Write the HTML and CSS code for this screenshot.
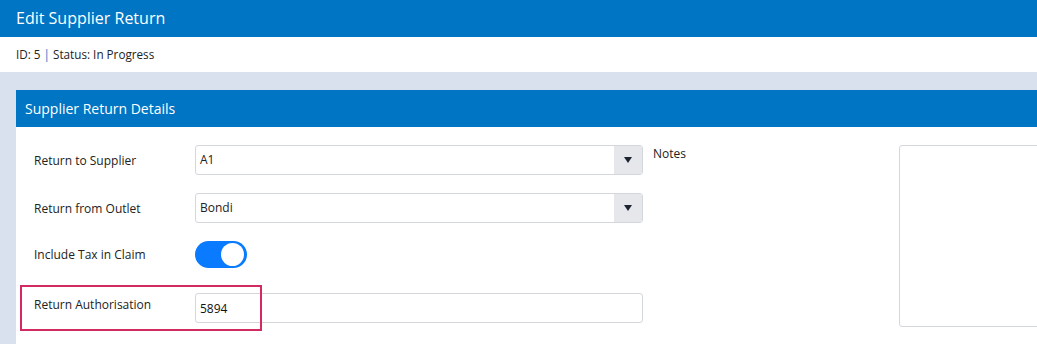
FILE: index.html
```html
<!DOCTYPE html>
<html>
<head>
    <title>Edit Supplier Return</title>
    <link rel="stylesheet" href="styles.css">
</head>
<body>
    <div class="page-title">Edit Supplier Return</div>
    <div class="page-status">ID: 5 <span class="sep">|</span> Status: In Progress</div>

    <div class="content">
        <div class="panel">
            <div class="panel-header">Supplier Return Details</div>
            <div class="panel-body">
                <div class="form-left">
                    <div class="form-row">
                        <label class="form-label">Return to Supplier</label>
                        <div class="select-box">
                            <span class="select-value">A1</span>
                            <span class="select-arrow"></span>
                        </div>
                    </div>
                    <div class="form-row">
                        <label class="form-label">Return from Outlet</label>
                        <div class="select-box">
                            <span class="select-value">Bondi</span>
                            <span class="select-arrow"></span>
                        </div>
                    </div>
                    <div class="form-row toggle-row">
                        <label class="form-label">Include Tax in Claim</label>
                        <div class="toggle on"><span class="knob"></span></div>
                    </div>
                    <div class="form-row auth-row">
                        <label class="form-label">Return Authorisation</label>
                        <input class="text-field" type="text" value="5894">
                        <div class="highlight"></div>
                    </div>
                </div>
                <div class="form-right">
                    <label class="notes-label">Notes</label>
                    <textarea class="notes-field"></textarea>
                </div>
            </div>
        </div>
    </div>
</body>
</html>
```

FILE: styles.css
```css
body {
    margin: 0;
    font-family: "Open Sans", "Noto Sans", sans-serif;
    background-color: #d9e1ef;
    color: #222;
    overflow: hidden;
}

.page-title {
    height: 37px;
    line-height: 36px;
    padding-left: 16px;
    background-color: #0075c4;
    color: #fff;
    font-size: 16px;
}

.page-status {
    height: 35px;
    line-height: 35px;
    padding-left: 16px;
    background-color: #fff;
    font-size: 11.7px;
}

.page-status .sep {
    color: #0075c4;
}

.content {
    padding: 18px 0 0 16px;
}

.panel {
    width: 1100px;
    background-color: #fff;
}

.panel-header {
    height: 37px;
    line-height: 37px;
    padding-left: 9px;
    background-color: #0075c4;
    color: #fff;
    font-size: 14px;
}

.panel-body {
    display: flex;
    padding: 18px 0 30px 18px;
}

.form-left {
    width: 609px;
}

.form-row {
    position: relative;
    display: flex;
    align-items: center;
    height: 30px;
    margin-bottom: 18px;
}

.toggle-row {
    height: 27px;
    margin-top: 2px;
    margin-bottom: 25px;
}

.form-label {
    width: 161px;
    flex-shrink: 0;
    font-size: 12px;
}

.auth-row .form-label {
    margin-top: -8px;
}

.select-box {
    display: flex;
    width: 446px;
    height: 28px;
    border: 1px solid #d3d6db;
    border-radius: 3px;
}

.select-value {
    flex: 1;
    line-height: 28px;
    padding-left: 4px;
    font-size: 12px;
}

.select-arrow {
    width: 28px;
    background-color: #e5e7eb;
    position: relative;
}

.select-arrow::after {
    content: "";
    position: absolute;
    left: 10px;
    top: 11px;
    border-left: 4px solid transparent;
    border-right: 4px solid transparent;
    border-top: 6px solid #1b2430;
}

.toggle {
    width: 52px;
    height: 27px;
    border-radius: 14px;
    background-color: #0a7bff;
    position: relative;
}

.toggle .knob {
    position: absolute;
    right: 3px;
    top: 2px;
    width: 23px;
    height: 23px;
    border-radius: 50%;
    background-color: #fff;
}

.text-field {
    height: 28px;
    margin: 0;
    padding: 0 4px;
    border: 1px solid #d3d6db;
    border-radius: 3px;
    box-sizing: content-box;
    width: 438px;
    font-family: inherit;
    font-size: 12px;
    color: #111;
    outline: none;
}

.highlight {
    position: absolute;
    left: -14px;
    top: -8px;
    width: 238px;
    height: 42px;
    border: 2px solid #d42a62;
    pointer-events: none;
}

.form-right {
    display: flex;
    align-items: flex-start;
    padding-left: 10px;
}

.notes-label {
    width: 246px;
    font-size: 12px;
    line-height: 18px;
}

.notes-field {
    width: 300px;
    height: 176px;
    margin: 0;
    border: 1px solid #d3d6db;
    border-radius: 3px;
    resize: none;
}
```
